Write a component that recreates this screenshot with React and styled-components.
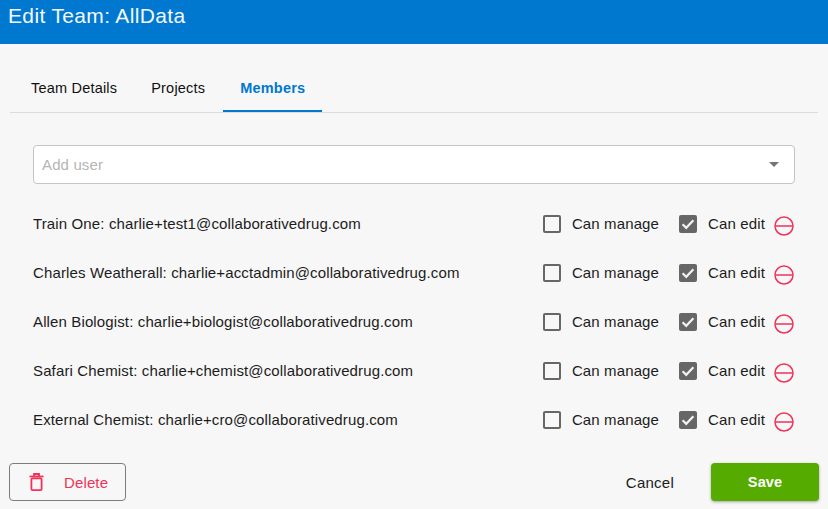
import React from 'react'
import styled, { createGlobalStyle } from 'styled-components'

const GlobalStyle = createGlobalStyle`
  html, body {
    margin: 0;
    padding: 0;
    background: #f7f7f7;
    font-family: "Liberation Sans", Arial, sans-serif;
    overflow: hidden;
  }
`

const Page = styled.div`
  width: 828px;
  height: 509px;
  display: flex;
  flex-direction: column;
  background: #f7f7f7;
  color: #1c1c1c;
`

const TitleBar = styled.header`
  height: 44px;
  flex: none;
  background: #0078cf;
  color: #f4f8fc;
  padding: 4px 8px 0;
  box-sizing: border-box;
  font-size: 21px;
  line-height: 23px;
  letter-spacing: 0.35px;
`

const TabBar = styled.nav`
  display: flex;
  margin: 23px 10px 0;
  padding-left: 4px;
  height: 45px;
  border-bottom: 1px solid #dcdcdc;
`

const Tab = styled.div`
  height: 45px;
  box-sizing: border-box;
  padding: 0 17px 2px;
  display: flex;
  align-items: center;
  font-size: 14.5px;
  letter-spacing: 0.2px;
  font-weight: ${p => (p.$active ? 700 : 400)};
  color: ${p => (p.$active ? '#0078cf' : '#111')};
  border-bottom: 2px solid ${p => (p.$active ? '#0078cf' : 'transparent')};
  margin-left: ${p => (p.$active ? '1px' : '0')};
`

const Content = styled.main`
  flex: 1;
  padding: 32px 33px 0;
`

const UserSelect = styled.div`
  height: 39px;
  box-sizing: border-box;
  background: #fff;
  border: 1px solid #c4c4c4;
  border-radius: 4px;
  display: flex;
  align-items: center;
  justify-content: space-between;
  padding: 0 15px 0 8px;
  font-size: 15px;
  letter-spacing: 0.13px;
  color: #b5b5b5;
`

const Caret = styled.span`
  width: 0;
  height: 0;
  border-left: 5px solid transparent;
  border-right: 5px solid transparent;
  border-top: 5px solid #757575;
`

const MemberList = styled.div`
  margin-top: 15px;
  display: flex;
  flex-direction: column;
`

const MemberRow = styled.div`
  height: 49px;
  display: flex;
  align-items: center;
  font-size: 15px;
  letter-spacing: 0.13px;
`

const MemberName = styled.span`
  flex: 1;
`

const Option = styled.label`
  display: flex;
  align-items: center;
  gap: 11px;
  margin-right: ${p => p.$gap}px;
`

const Box = styled.span`
  width: 18px;
  height: 18px;
  box-sizing: border-box;
  border-radius: 2px;
  border: 2px solid #666;
  background: ${p => (p.$checked ? '#666' : 'transparent')};
  display: flex;
  align-items: center;
  justify-content: center;
`

const RemoveButton = styled.span`
  display: flex;
  width: 20px;
  height: 20px;
  margin: 5px 1px 0 0;
`

const Footer = styled.footer`
  display: flex;
  align-items: center;
  padding: 0 9px 8px;
  height: 38px;
`

const DeleteButton = styled.button`
  width: 117px;
  height: 38px;
  box-sizing: border-box;
  background: transparent;
  border: 1px solid #7d7d7d;
  border-radius: 4px;
  display: flex;
  align-items: center;
  gap: 20px;
  padding: 0 0 0 19px;
  color: #f0325a;
  font: 15px "Liberation Sans", Arial, sans-serif;
  letter-spacing: 0.13px;
`

const CancelButton = styled.button`
  margin-left: auto;
  margin-right: 37px;
  background: none;
  border: 0;
  padding: 0;
  color: #1c1c1c;
  font: 15px "Liberation Sans", Arial, sans-serif;
  letter-spacing: 0.25px;
`

const SaveButton = styled.button`
  width: 108px;
  height: 38px;
  background: #55ab00;
  border: 0;
  border-radius: 4px;
  box-shadow: 0 1px 3px rgba(0, 0, 0, 0.35);
  color: #fff;
  font: 700 14.5px "Liberation Sans", Arial, sans-serif;
  letter-spacing: 0.1px;
`

const members = [
  'Train One: charlie+test1@collaborativedrug.com',
  'Charles Weatherall: charlie+acctadmin@collaborativedrug.com',
  'Allen Biologist: charlie+biologist@collaborativedrug.com',
  'Safari Chemist: charlie+chemist@collaborativedrug.com',
  'External Chemist: charlie+cro@collaborativedrug.com',
]

function Check() {
  return (
    <svg width="14" height="14" viewBox="0 0 14 14" fill="none">
      <path d="M1.6 7.2 5.2 10.8 12.4 3.2" stroke="#f2f2f2" strokeWidth="2.2" />
    </svg>
  )
}

function MinusCircle() {
  return (
    <svg width="20" height="20" viewBox="0 0 20 20" fill="none" stroke="#f0325a" strokeWidth="1.5">
      <circle cx="10" cy="10" r="9" />
      <path d="M1.5 10h17" />
    </svg>
  )
}

function Trash() {
  return (
    <svg width="15" height="18" viewBox="0 0 15 18" fill="none" stroke="#f0325a" strokeWidth="1.8">
      <path d="M0.5 3.5h14" />
      <path d="M5 3V1h5V3" />
      <rect x="2.4" y="5.4" width="10.2" height="11.7" rx="1" />
    </svg>
  )
}

export default function App() {
  return (
    <Page>
      <GlobalStyle />
      <TitleBar>Edit Team: AllData</TitleBar>
      <TabBar>
        <Tab>Team Details</Tab>
        <Tab>Projects</Tab>
        <Tab $active>Members</Tab>
      </TabBar>
      <Content>
        <UserSelect>
          Add user
          <Caret />
        </UserSelect>
        <MemberList>
          {members.map(member => (
            <MemberRow key={member}>
              <MemberName>{member}</MemberName>
              <Option $gap={20}>
                <Box />
                Can manage
              </Option>
              <Option $gap={9}>
                <Box $checked>
                  <Check />
                </Box>
                Can edit
              </Option>
              <RemoveButton>
                <MinusCircle />
              </RemoveButton>
            </MemberRow>
          ))}
        </MemberList>
      </Content>
      <Footer>
        <DeleteButton>
          <Trash />
          Delete
        </DeleteButton>
        <CancelButton>Cancel</CancelButton>
        <SaveButton>Save</SaveButton>
      </Footer>
    </Page>
  )
}
